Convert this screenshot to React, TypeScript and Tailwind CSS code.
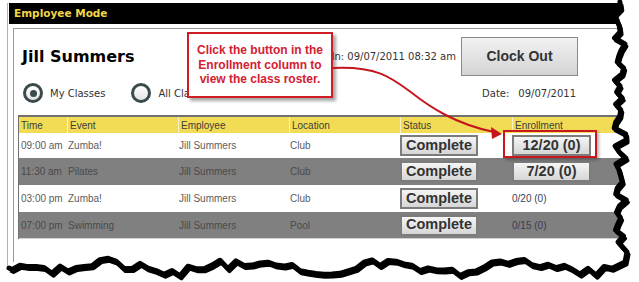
import React from 'react'

const verdana = "font-['DejaVu_Sans',sans-serif]"
const arial = "font-['Liberation_Sans',Arial,sans-serif]"

type Row = { time: string; event: string; location: string; enroll: string; button: boolean }

const rows: Row[] = [
  { time: '09:00 am', event: 'Zumba!', location: 'Club', enroll: '12/20 (0)', button: true },
  { time: '11:30 am', event: 'Pilates', location: 'Club', enroll: '7/20 (0)', button: true },
  { time: '03:00 pm', event: 'Zumba!', location: 'Club', enroll: '0/20 (0)', button: false },
  { time: '07:00 pm', event: 'Swimming', location: 'Pool', enroll: '0/15 (0)', button: false },
]

const rowHeights = ['h-[25px]', 'h-[27px]', 'h-[27px]', 'h-[26px]']

// seeded jitter so the torn edge looks the same every run
function makeRand(seed: number) {
  let s = seed
  return () => {
    s = (s * 9301 + 49297) % 233280
    return s / 233280
  }
}

function tornEdge() {
  const r = makeRand(7)
  const pts: [number, number][] = []
  for (let y = 2; y <= 244; y += 6) {
    pts.push([620 + (r() - 0.5) * 13, y])
  }
  pts.push([627, 252])
  pts.push([625, 262])
  for (let x = 612; x >= 12; x -= 8) {
    const bump = Math.sin(x * 0.045) * 4
    pts.push([x, 267 + bump + (r() - 0.5) * 10])
  }
  pts.push([9, 268])
  return pts
}

function Radio({ on }: { on?: boolean }) {
  return (
    <div className="w-[20px] h-[20px] rounded-full border-[3px] border-[#3b4a4c] bg-gradient-to-b from-white to-[#e4e4e4] flex items-center justify-center">
      {on && <div className="w-[7px] h-[7px] rounded-full bg-[#3b4a4c]" />}
    </div>
  )
}

function GrayButton({ label, w }: { label: string; w: string }) {
  return (
    <div
      className={`${w} h-[21px] border-2 border-[#7c7c7c] bg-gradient-to-b from-[#f5f5f5] to-[#d6d6d6] flex items-center justify-center ${arial} font-bold text-[14.5px] text-[#333]`}
    >
      {label}
    </div>
  )
}

export default function App() {
  const edge = tornEdge()
  const line = edge.map((p, i) => `${i ? 'L' : 'M'}${p[0].toFixed(1)},${p[1].toFixed(1)}`).join(' ')
  const fill = `M618,0 ${line.replace('M', 'L')} L9,282 L639,282 L639,0 Z`

  return (
    <div className="relative w-[639px] h-[282px] bg-white overflow-hidden pt-[3px]">
      {/* outer frame */}
      <div className="ml-[7px] w-[625px] h-[265px] border-l border-[#b0b0b0]">
        <div className={`ml-[1px] h-[21px] bg-black flex items-center pl-[5px] ${verdana} font-bold text-[10.5px] text-[#f0d64a]`}>
          Employee Mode
        </div>

        {/* panel */}
        <div className="mt-[4px] ml-[5px] h-[234px] border-l border-t border-[#999]">
          <div className="pl-[8px] pt-[8px]">
            <div className="w-[556px] h-[39px] flex items-center">
              <div className={`${verdana} font-bold text-[16px] text-black`}>Jill Summers</div>
              <div className="ml-auto flex items-center">
                <span className={`${verdana} text-[10px] text-[#333]`}>In: 09/07/2011 08:32 am</span>
                <div className={`ml-[5px] w-[117px] h-[39px] border border-[#8a8a8a] bg-gradient-to-b from-[#f2f2f2] to-[#d4d4d4] flex items-center justify-center ${arial} font-bold text-[14px] text-[#333]`}>
                  Clock Out
                </div>
              </div>
            </div>

            <div className="mt-[7px] w-[556px] h-[20px] flex items-center">
              <div className="ml-[1px] flex items-center">
                <Radio on />
                <span className={`ml-[7px] ${verdana} text-[10px] text-[#333]`}>My Classes</span>
              </div>
              <div className="ml-[26px] flex items-center">
                <Radio />
                <span className={`ml-[7px] ${verdana} text-[10px] text-[#333]`}>All Classes</span>
              </div>
              <div className={`ml-auto mr-[2px] ${verdana} text-[10px] text-[#333] flex`}>
                <span>Date:</span>
                <span className="ml-[9px]">09/07/2011</span>
              </div>
            </div>
          </div>

          {/* class table */}
          <div className={`mt-[12px] ml-[4px] w-[610px] border-t-2 border-l border-[#707070] ${arial} text-[10px]`}>
            <div className="h-[16px] grid grid-cols-[48px_111px_111px_111px_112px_1fr] bg-[#f2dc56] text-[#3c3c3c]">
              {['Time', 'Event', 'Employee', 'Location', 'Status', 'Enrollment'].map((h, i) => (
                <div key={h} className={`pl-[2px] flex items-center ${i ? 'border-l border-[#fbf3c2]' : ''}`}>
                  {h}
                </div>
              ))}
            </div>
            {rows.map((r, i) => (
              <div
                key={r.time}
                className={`${rowHeights[i]} grid grid-cols-[48px_111px_111px_111px_112px_1fr] items-center ${
                  i % 2 ? 'bg-[#808080] text-[#4a4a4a]' : 'bg-white text-[#5c5c5c]'
                }`}
              >
                <div className="pl-[2px]">{r.time}</div>
                <div className="pl-[1px]">{r.event}</div>
                <div className="pl-[1px]">Jill Summers</div>
                <div className="pl-[1px]">{r.location}</div>
                <div>
                  <GrayButton label="Complete" w="w-[78px]" />
                </div>
                <div>
                  {r.button ? (
                    <GrayButton label={r.enroll} w="w-[79px]" />
                  ) : (
                    <span className="text-[#3b3b55]">{r.enroll}</span>
                  )}
                </div>
              </div>
            ))}
            <div className="h-px bg-[#d0d0d0]" />
          </div>
        </div>
      </div>

      {/* callout annotation */}
      <div className="absolute left-[187px] top-[32px] w-[146px] h-[66px] border-2 border-[#d01c24] bg-white shadow-[3px_3px_3px_rgba(0,0,0,0.35)] flex items-center justify-center">
        <div className={`${arial} font-bold text-[12px] leading-[14.5px] text-[#d42030] text-center`}>
          Click the button in the
          <br />
          Enrollment column to
          <br />
          view the class roster.
        </div>
      </div>

      {/* highlight around the enrollment button */}
      <div className="absolute left-[503px] top-[130px] w-[94px] h-[28px] border-2 border-[#c8181e] shadow-[2px_2px_3px_rgba(0,0,0,0.3)]" />

      {/* arrow + torn edge */}
      <svg className="absolute inset-0 pointer-events-none" width="639" height="282" viewBox="0 0 639 282">
        <path
          d="M333,68 C378,66 392,78 412,93 C430,107 455,124 494,132"
          fill="none"
          stroke="#c4161c"
          strokeWidth="2"
        />
        <polygon points="502,134 491,127 492,139" fill="#c4161c" />
        <path d={fill} fill="white" />
        <path d={line} fill="none" stroke="black" strokeWidth="5" strokeLinejoin="round" strokeLinecap="round" />
        <path d={line} fill="none" stroke="black" strokeWidth="4" strokeLinejoin="round" transform="translate(1.5,2.5)" />
      </svg>
    </div>
  )
}
